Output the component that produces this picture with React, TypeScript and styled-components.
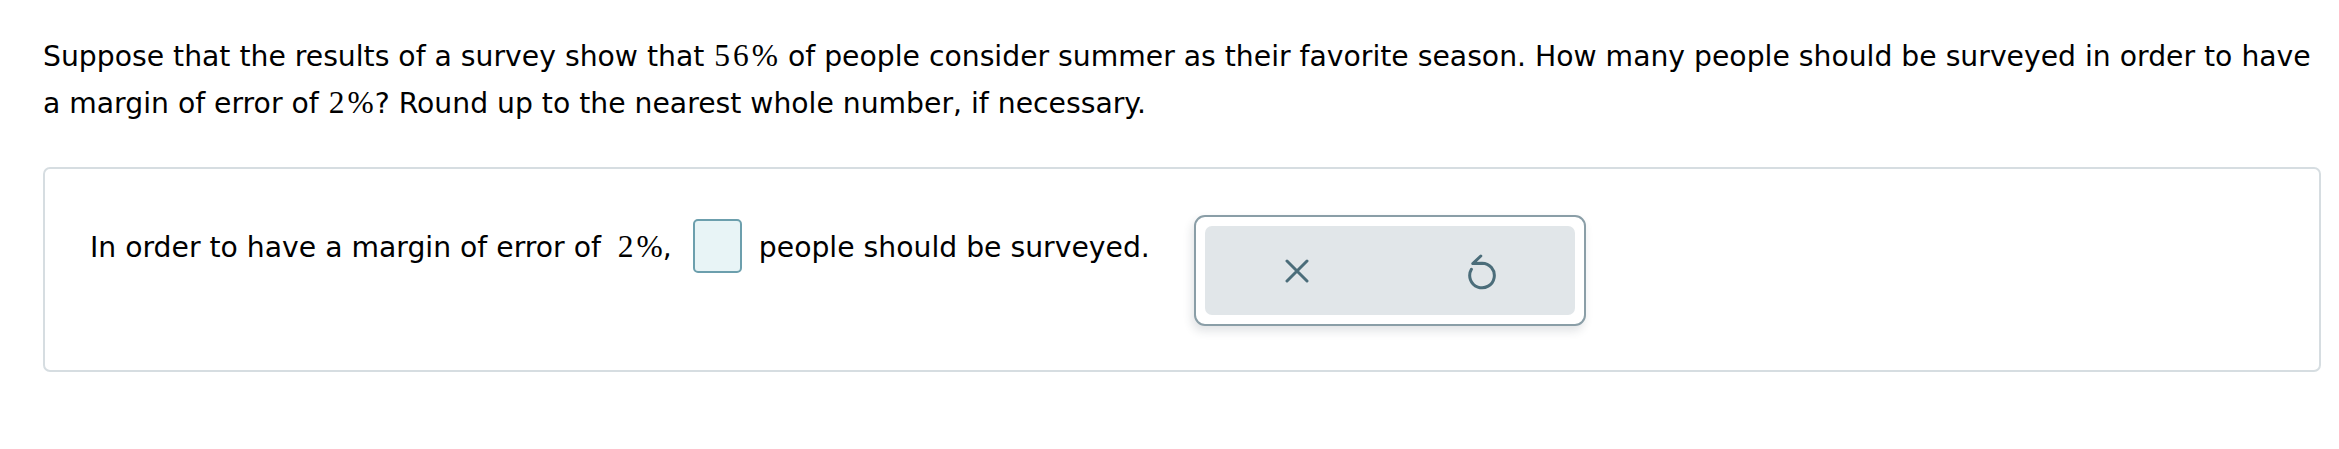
import styled, { createGlobalStyle } from 'styled-components';

const GlobalStyle = createGlobalStyle`
  html, body {
    margin: 0;
    padding: 0;
    background: #ffffff;
  }
  body {
    font-family: "DejaVu Sans", Verdana, sans-serif;
    color: #000;
  }
`;

const Page = styled.main`
  padding: 33px 18px 0 43px;
`;

const Question = styled.p`
  margin: 0 0 40px;
  font-size: 28.25px;
  line-height: 47px;
`;

const MathNum = styled.span`
  font-family: "Liberation Serif", "Times New Roman", serif;
  font-size: 31.5px;
  line-height: 1;
  letter-spacing: 3px;
  padding-left: 1px;
  margin-right: -2px;
`;

const AnswerMath = styled(MathNum)`
  padding: 0 0 0 8px;
  margin-right: -3px;
`;

const Card = styled.section`
  border: 2px solid #d6dde1;
  border-radius: 7px;
  padding: 46px 44px 44px 45px;
  display: flex;
  align-items: flex-start;
  gap: 44px;
  height: 111px;
`;

const AnswerRow = styled.div`
  display: flex;
  align-items: baseline;
  font-size: 28.25px;
  line-height: 66px;
  white-space: pre;
`;

const AnswerBox = styled.span`
  display: block;
  align-self: flex-start;
  box-sizing: border-box;
  width: 49px;
  height: 54px;
  margin: 4px 17px 0 21px;
  border: 2px solid #6c9fad;
  border-radius: 5px;
  background: #e8f4f6;
`;

const ToolFrame = styled.div`
  box-sizing: border-box;
  flex: none;
  width: 392px;
  height: 111px;
  padding: 9px;
  border: 2px solid #8a9ea7;
  border-radius: 11px;
  background: #fff;
  box-shadow: -2px 5px 10px rgba(40, 60, 70, 0.14);
`;

const ToolBar = styled.div`
  display: flex;
  height: 100%;
  border-radius: 7px;
  background: #e1e6e9;
`;

const ToolButton = styled.button`
  flex: 1;
  display: flex;
  align-items: center;
  justify-content: center;
  border: none;
  background: transparent;
  padding: 0;
  cursor: pointer;
  color: #4b6d7a;
`;

const ClearIcon = () => (
  <svg width="24" height="24" viewBox="0 0 24 24" fill="none">
    <path d="M2 2 L22 22 M22 2 L2 22" stroke="currentColor" strokeWidth="3" strokeLinecap="round" />
  </svg>
);

const RevertIcon = () => (
  <svg width="36" height="40" viewBox="0 0 36 40" fill="none">
    <path
      d="M16.8 5 L8.8 12.6 L18 12.2 A12.3 12.3 0 1 1 7.4 18.3"
      stroke="currentColor"
      strokeWidth="3"
      strokeLinecap="round"
      strokeLinejoin="round"
    />
  </svg>
);

export default function App() {
  return (
    <>
      <GlobalStyle />
      <Page>
        <Question>
          Suppose that the results of a survey show that <MathNum>56%</MathNum> of people consider summer as
          their favorite season. How many people should be surveyed in order to have a margin of error of{' '}
          <MathNum>2%</MathNum>? Round up to the nearest whole number, if necessary.
        </Question>
        <Card>
          <AnswerRow>
            <span>In order to have a margin of error of </span>
            <AnswerMath>2%</AnswerMath>
            <span>,</span>
            <AnswerBox aria-label="answer" />
            <span>people should be surveyed.</span>
          </AnswerRow>
          <ToolFrame>
            <ToolBar>
              <ToolButton aria-label="Clear">
                <ClearIcon />
              </ToolButton>
              <ToolButton aria-label="Revert">
                <RevertIcon />
              </ToolButton>
            </ToolBar>
          </ToolFrame>
        </Card>
      </Page>
    </>
  );
}
